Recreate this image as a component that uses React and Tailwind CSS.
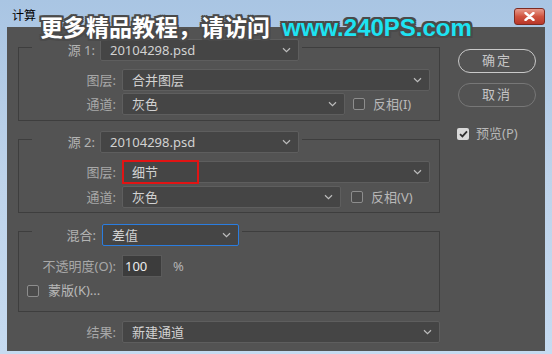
import React from "react";

function Chevron() {
  return (
    <svg width="9" height="6" viewBox="0 0 9 6" className="shrink-0">
      <path d="M1 1.2 L4.5 4.6 L8 1.2" fill="none" stroke="#bdbdbd" strokeWidth="1.2" />
    </svg>
  );
}

function Select({ className = "", children }) {
  return (
    <div
      className={`h-[22px] flex items-center justify-between bg-[#454545] border rounded-[2px] pl-[9px] pr-[7px] text-[13px] text-[#d2d2d2] ${className}`}
    >
      <span className="leading-none">{children}</span>
      <Chevron />
    </div>
  );
}

function Check({ checked = false }) {
  if (checked) {
    return (
      <div className="w-[12px] h-[12px] rounded-[2px] bg-[#d9d9d9] flex items-center justify-center shrink-0">
        <svg width="9" height="8" viewBox="0 0 9 8">
          <path d="M1 4.2 L3.4 6.4 L8 1.4" fill="none" stroke="#2f2f2f" strokeWidth="1.8" />
        </svg>
      </div>
    );
  }
  return <div className="w-[12px] h-[12px] rounded-[2px] border border-[#8d8d8d] bg-[#4b4b4b] shrink-0" />;
}

export default function App() {
  return (
    <div className="w-[552px] h-[354px] relative overflow-hidden flex flex-col bg-gradient-to-b from-[#a9c5e3] via-[#bed3ea] to-[#c6dbf1] font-['Noto_Sans','Noto_Sans_CJK_SC',sans-serif]">
      {/* title bar */}
      <div className="h-[27px] flex items-start justify-between pl-[12px] pr-[7px] shrink-0">
        <div className="mt-[9px] text-[12px] leading-[14px] text-black">计算</div>
        <div className="mt-[8px] w-[31px] h-[17px] rounded-[3px] border border-[#7d2b22] bg-gradient-to-b from-[#e69a8c] via-[#d0533f] to-[#b9372a] flex items-center justify-center">
          <svg width="11" height="9" viewBox="0 0 11 9">
            <path d="M1.5 1 L9.5 8 M9.5 1 L1.5 8" stroke="#ffffff" strokeWidth="2.4" strokeLinecap="round" />
          </svg>
        </div>
      </div>

      {/* dialog panel */}
      <div className="mx-[7px] h-[324px] bg-[#535353] flex pl-[11px] shrink-0">
        {/* left column */}
        <div className="w-[422px] flex flex-col pt-[20px]">
          {/* group 1 */}
          <div className="border border-[#3e3e3e] flex flex-col pb-[5px]">
            <div className="-mt-[9px] ml-[13px] self-start flex items-center bg-[#535353] pr-[3px]">
              <div className="w-[63px] text-right text-[13px] text-[#b3b3b3] leading-none">源 1:</div>
              <Select className="ml-[5px] w-[199px] border-[#5e5e5e]">20104298.psd</Select>
            </div>
            <div className="mt-[8px] flex items-center">
              <div className="w-[97px] text-right text-[13px] text-[#a8a8a8] leading-none">图层:</div>
              <Select className="ml-[6px] w-[308px] border-[#5e5e5e]">合并图层</Select>
            </div>
            <div className="mt-[2px] flex items-center">
              <div className="w-[97px] text-right text-[13px] text-[#a8a8a8] leading-none">通道:</div>
              <Select className="ml-[6px] w-[223px] border-[#5e5e5e]">灰色</Select>
              <div className="ml-[8px]"><Check /></div>
              <div className="ml-[8px] text-[13px] text-[#b8b8b8] leading-none">反相(I)</div>
            </div>
          </div>

          {/* group 2 */}
          <div className="mt-[18px] border border-[#3e3e3e] flex flex-col pb-[4px]">
            <div className="-mt-[9px] ml-[13px] self-start flex items-center bg-[#535353] pr-[3px]">
              <div className="w-[63px] text-right text-[13px] text-[#b3b3b3] leading-none">源 2:</div>
              <Select className="ml-[5px] w-[199px] border-[#5e5e5e]">20104298.psd</Select>
            </div>
            <div className="mt-[8px] flex items-center">
              <div className="w-[97px] text-right text-[13px] text-[#a8a8a8] leading-none">图层:</div>
              <div className="ml-[6px] relative">
                <Select className="w-[308px] border-[#5e5e5e]">细节</Select>
                <div className="absolute left-0 top-[-1px] w-[77px] h-[24px] border-2 border-[#e11414]" />
              </div>
            </div>
            <div className="mt-[3px] flex items-center">
              <div className="w-[97px] text-right text-[13px] text-[#a8a8a8] leading-none">通道:</div>
              <Select className="ml-[6px] w-[219px] border-[#5e5e5e]">灰色</Select>
              <div className="ml-[10px]"><Check /></div>
              <div className="ml-[8px] text-[13px] text-[#b8b8b8] leading-none">反相(V)</div>
            </div>
          </div>

          {/* group 3 */}
          <div className="mt-[18px] border border-[#3e3e3e] flex flex-col pb-[14px]">
            <div className="-mt-[8px] ml-[13px] self-start flex items-center bg-[#535353] pr-[3px]">
              <div className="w-[64px] text-right text-[13px] text-[#b3b3b3] leading-none">混合:</div>
              <Select className="ml-[6px] w-[137px] border-[#2a7de0]">差值</Select>
            </div>
            <div className="mt-[9px] flex items-center">
              <div className="w-[97px] text-right text-[13px] text-[#a8a8a8] leading-none">不透明度(O):</div>
              <div className="ml-[6px] w-[40px] h-[22px] bg-[#3c3c3c] border border-[#5a5a5a] flex items-center pl-[2px] text-[13px] text-[#ececec] leading-none">100</div>
              <div className="ml-[11px] text-[13px] text-[#b3b3b3] leading-none">%</div>
            </div>
            <div className="mt-[7px] flex items-center">
              <div className="ml-[8px]"><Check /></div>
              <div className="ml-[9px] text-[13px] text-[#b8b8b8] leading-none">蒙版(K)...</div>
            </div>
          </div>

          {/* result */}
          <div className="mt-[9px] flex items-center">
            <div className="w-[98px] text-right text-[13px] text-[#a8a8a8] leading-none">结果:</div>
            <Select className="ml-[6px] w-[318px] border-[#5e5e5e]">新建通道</Select>
          </div>
        </div>

        {/* right column */}
        <div className="ml-[18px] w-[78px] flex flex-col pt-[22px]">
          <div className="h-[24px] rounded-full border-[1.5px] border-[#c9c9c9] flex items-center justify-center text-[13px] tracking-[2px] text-[#c6c6c6]">确定</div>
          <div className="mt-[10px] h-[24px] rounded-full border border-[#777777] flex items-center justify-center text-[13px] tracking-[2px] text-[#c6c6c6]">取消</div>
          <div className="mt-[20px] flex items-center -ml-[1px]">
            <Check checked />
            <div className="ml-[7px] text-[13px] text-[#b8b8b8] leading-none">预览(P)</div>
          </div>
        </div>
      </div>

      {/* watermark overlay */}
      <div className="absolute left-[40px] top-[15px] flex items-baseline">
        <span className="text-[23px] font-bold leading-none text-white font-['Noto_Sans_CJK_SC',sans-serif] [text-shadow:-2px_-2px_0_#4a4a4a,2px_-2px_0_#4a4a4a,-2px_2px_0_#4a4a4a,2px_2px_0_#4a4a4a,0_2px_0_#4a4a4a,0_-2px_0_#4a4a4a,2px_0_0_#4a4a4a,-2px_0_0_#4a4a4a]">
          更多精品教程，请访问
        </span>
        <span className="ml-[12px] text-[24px] font-bold leading-none text-[#1de3f2] font-['Liberation_Sans',sans-serif] [text-shadow:-2px_-2px_0_#4a4a4a,2px_-2px_0_#4a4a4a,-2px_2px_0_#4a4a4a,2px_2px_0_#4a4a4a,0_2px_0_#4a4a4a,0_-2px_0_#4a4a4a,2px_0_0_#4a4a4a,-2px_0_0_#4a4a4a]">
          www.240PS.com
        </span>
      </div>
    </div>
  );
}
